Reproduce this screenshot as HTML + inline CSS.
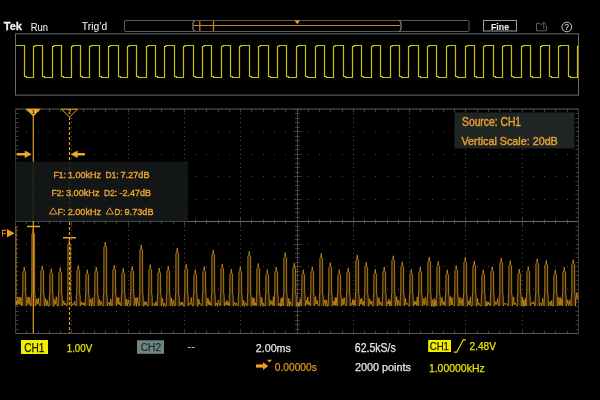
<!DOCTYPE html>
<html><head><meta charset="utf-8"><style>
html,body{margin:0;padding:0;background:#000;width:600px;height:400px;overflow:hidden}
svg{display:block;will-change:transform}
text{font-family:"Liberation Sans", sans-serif}
</style></head><body>
<svg width="600" height="400" viewBox="0 0 600 400">
<rect width="600" height="400" fill="#000"/>
<!-- top bar -->
<rect x="124.5" y="20.5" width="344.5" height="11" rx="1.5" fill="none" stroke="#5c5c5c" stroke-width="1"/>
<path d="M194,25.5 H400" stroke="#cc861a" stroke-width="1.2"/>
<path d="M199.8,21 V31 M213.5,21 V31" stroke="#cc861a" stroke-width="1.2"/>
<path d="M194.8,21 Q193,21.3 193,23 V29 Q193,30.7 194.8,31" fill="none" stroke="#a8a8a8" stroke-width="1"/>
<path d="M399.2,21 Q401,21.3 401,23 V29 Q401,30.7 399.2,31" fill="none" stroke="#a8a8a8" stroke-width="1"/>
<path d="M294.5,20.5 H300 L297.3,24.2 Z" fill="#f0a020"/>
<rect x="483.5" y="20.5" width="33" height="10.5" fill="none" stroke="#a0a0a0" stroke-width="1"/>
<path d="M546.5,25.5 V30.8 H536.5 V23.3 H539.8 L541.2,24.8 H542 M543.8,28.8 V22.2 M541.6,24.4 L543.8,22.2 L546,24.4" fill="none" stroke="#5a5e5e" stroke-width="1"/>
<circle cx="566.8" cy="27" r="4.8" fill="none" stroke="#c8c8c8" stroke-width="1"/>
<text x="566.8" y="30.3" font-size="8.6" fill="#c8c8c8" stroke="#c8c8c8" stroke-width="0.2" text-anchor="middle" textLength="4.4" lengthAdjust="spacingAndGlyphs">?</text>
<!-- overview -->
<rect x="15.5" y="33.8" width="563" height="61.3" fill="none" stroke="#6a6a6a" stroke-width="1"/>
<path d="M16,45.5 H24.5 V76.5 H26.5 V77.5 H33.5 V46.5 H35.0 V45.5 H42.5 V76.5 H44.5 V77.5 H52.5 V46.5 H54.0 V45.5 H61.5 V76.5 H63.5 V77.5 H71.5 V46.5 H73.0 V45.5 H80.5 V76.5 H82.5 V77.5 H89.5 V46.5 H91.0 V45.5 H99.5 V76.5 H101.5 V77.5 H108.5 V46.5 H110.0 V45.5 H118.5 V76.5 H120.5 V77.5 H127.5 V46.5 H129.0 V45.5 H136.5 V76.5 H138.5 V77.5 H146.5 V46.5 H148.0 V45.5 H155.5 V76.5 H157.5 V77.5 H164.5 V46.5 H166.0 V45.5 H174.5 V76.5 H176.5 V77.5 H183.5 V46.5 H185.0 V45.5 H193.5 V76.5 H195.5 V77.5 H202.5 V46.5 H204.0 V45.5 H211.5 V76.5 H213.5 V77.5 H221.5 V46.5 H223.0 V45.5 H230.5 V76.5 H232.5 V77.5 H239.5 V46.5 H241.0 V45.5 H249.5 V76.5 H251.5 V77.5 H258.5 V46.5 H260.0 V45.5 H268.5 V76.5 H270.5 V77.5 H277.5 V46.5 H279.0 V45.5 H286.5 V76.5 H288.5 V77.5 H296.5 V46.5 H298.0 V45.5 H305.5 V76.5 H307.5 V77.5 H315.5 V46.5 H317.0 V45.5 H324.5 V76.5 H326.5 V77.5 H333.5 V46.5 H335.0 V45.5 H343.5 V76.5 H345.5 V77.5 H352.5 V46.5 H354.0 V45.5 H361.5 V76.5 H363.5 V77.5 H371.5 V46.5 H373.0 V45.5 H380.5 V76.5 H382.5 V77.5 H390.5 V46.5 H392.0 V45.5 H399.5 V76.5 H401.5 V77.5 H408.5 V46.5 H410.0 V45.5 H418.5 V76.5 H420.5 V77.5 H427.5 V46.5 H429.0 V45.5 H436.5 V76.5 H438.5 V77.5 H446.5 V46.5 H448.0 V45.5 H455.5 V76.5 H457.5 V77.5 H465.5 V46.5 H467.0 V45.5 H474.5 V76.5 H476.5 V77.5 H483.5 V46.5 H485.0 V45.5 H493.5 V76.5 H495.5 V77.5 H502.5 V46.5 H504.0 V45.5 H511.5 V76.5 H513.5 V77.5 H521.5 V46.5 H523.0 V45.5 H530.5 V76.5 H532.5 V77.5 H540.5 V46.5 H542.0 V45.5 H549.5 V76.5 H551.5 V77.5 H558.5 V46.5 H560.0 V45.5 H568.5 V76.5 H570.5 V77.5 H577.5 V46.5 H578 V45.5 H578" fill="none" stroke="#ccc400" stroke-width="1.2"/>
<!-- graticule -->
<path d="M71.00,109.00h1v1h-1z M71.00,113.00h1v1h-1z M71.00,118.00h1v1h-1z M71.00,122.00h1v1h-1z M71.00,127.00h1v1h-1z M71.00,131.00h1v1h-1z M71.00,136.00h1v1h-1z M71.00,140.00h1v1h-1z M71.00,145.00h1v1h-1z M71.00,149.00h1v1h-1z M71.00,154.00h1v1h-1z M71.00,158.00h1v1h-1z M71.00,163.00h1v1h-1z M71.00,167.00h1v1h-1z M71.00,172.00h1v1h-1z M71.00,176.00h1v1h-1z M71.00,181.00h1v1h-1z M71.00,185.00h1v1h-1z M71.00,190.00h1v1h-1z M71.00,194.00h1v1h-1z M71.00,199.00h1v1h-1z M71.00,203.00h1v1h-1z M71.00,208.00h1v1h-1z M71.00,212.00h1v1h-1z M71.00,217.00h1v1h-1z M71.00,221.00h1v1h-1z M71.00,226.00h1v1h-1z M71.00,230.00h1v1h-1z M71.00,235.00h1v1h-1z M71.00,239.00h1v1h-1z M71.00,244.00h1v1h-1z M71.00,248.00h1v1h-1z M71.00,253.00h1v1h-1z M71.00,257.00h1v1h-1z M71.00,262.00h1v1h-1z M71.00,266.00h1v1h-1z M71.00,271.00h1v1h-1z M71.00,275.00h1v1h-1z M71.00,280.00h1v1h-1z M71.00,284.00h1v1h-1z M71.00,289.00h1v1h-1z M71.00,293.00h1v1h-1z M71.00,297.00h1v1h-1z M71.00,302.00h1v1h-1z M71.00,306.00h1v1h-1z M71.00,311.00h1v1h-1z M71.00,315.00h1v1h-1z M71.00,320.00h1v1h-1z M71.00,324.00h1v1h-1z M71.00,329.00h1v1h-1z M71.00,333.00h1v1h-1z M128.00,109.00h1v1h-1z M128.00,113.00h1v1h-1z M128.00,118.00h1v1h-1z M128.00,122.00h1v1h-1z M128.00,127.00h1v1h-1z M128.00,131.00h1v1h-1z M128.00,136.00h1v1h-1z M128.00,140.00h1v1h-1z M128.00,145.00h1v1h-1z M128.00,149.00h1v1h-1z M128.00,154.00h1v1h-1z M128.00,158.00h1v1h-1z M128.00,163.00h1v1h-1z M128.00,167.00h1v1h-1z M128.00,172.00h1v1h-1z M128.00,176.00h1v1h-1z M128.00,181.00h1v1h-1z M128.00,185.00h1v1h-1z M128.00,190.00h1v1h-1z M128.00,194.00h1v1h-1z M128.00,199.00h1v1h-1z M128.00,203.00h1v1h-1z M128.00,208.00h1v1h-1z M128.00,212.00h1v1h-1z M128.00,217.00h1v1h-1z M128.00,221.00h1v1h-1z M128.00,226.00h1v1h-1z M128.00,230.00h1v1h-1z M128.00,235.00h1v1h-1z M128.00,239.00h1v1h-1z M128.00,244.00h1v1h-1z M128.00,248.00h1v1h-1z M128.00,253.00h1v1h-1z M128.00,257.00h1v1h-1z M128.00,262.00h1v1h-1z M128.00,266.00h1v1h-1z M128.00,271.00h1v1h-1z M128.00,275.00h1v1h-1z M128.00,280.00h1v1h-1z M128.00,284.00h1v1h-1z M128.00,289.00h1v1h-1z M128.00,293.00h1v1h-1z M128.00,297.00h1v1h-1z M128.00,302.00h1v1h-1z M128.00,306.00h1v1h-1z M128.00,311.00h1v1h-1z M128.00,315.00h1v1h-1z M128.00,320.00h1v1h-1z M128.00,324.00h1v1h-1z M128.00,329.00h1v1h-1z M128.00,333.00h1v1h-1z M184.00,109.00h1v1h-1z M184.00,113.00h1v1h-1z M184.00,118.00h1v1h-1z M184.00,122.00h1v1h-1z M184.00,127.00h1v1h-1z M184.00,131.00h1v1h-1z M184.00,136.00h1v1h-1z M184.00,140.00h1v1h-1z M184.00,145.00h1v1h-1z M184.00,149.00h1v1h-1z M184.00,154.00h1v1h-1z M184.00,158.00h1v1h-1z M184.00,163.00h1v1h-1z M184.00,167.00h1v1h-1z M184.00,172.00h1v1h-1z M184.00,176.00h1v1h-1z M184.00,181.00h1v1h-1z M184.00,185.00h1v1h-1z M184.00,190.00h1v1h-1z M184.00,194.00h1v1h-1z M184.00,199.00h1v1h-1z M184.00,203.00h1v1h-1z M184.00,208.00h1v1h-1z M184.00,212.00h1v1h-1z M184.00,217.00h1v1h-1z M184.00,221.00h1v1h-1z M184.00,226.00h1v1h-1z M184.00,230.00h1v1h-1z M184.00,235.00h1v1h-1z M184.00,239.00h1v1h-1z M184.00,244.00h1v1h-1z M184.00,248.00h1v1h-1z M184.00,253.00h1v1h-1z M184.00,257.00h1v1h-1z M184.00,262.00h1v1h-1z M184.00,266.00h1v1h-1z M184.00,271.00h1v1h-1z M184.00,275.00h1v1h-1z M184.00,280.00h1v1h-1z M184.00,284.00h1v1h-1z M184.00,289.00h1v1h-1z M184.00,293.00h1v1h-1z M184.00,297.00h1v1h-1z M184.00,302.00h1v1h-1z M184.00,306.00h1v1h-1z M184.00,311.00h1v1h-1z M184.00,315.00h1v1h-1z M184.00,320.00h1v1h-1z M184.00,324.00h1v1h-1z M184.00,329.00h1v1h-1z M184.00,333.00h1v1h-1z M240.00,109.00h1v1h-1z M240.00,113.00h1v1h-1z M240.00,118.00h1v1h-1z M240.00,122.00h1v1h-1z M240.00,127.00h1v1h-1z M240.00,131.00h1v1h-1z M240.00,136.00h1v1h-1z M240.00,140.00h1v1h-1z M240.00,145.00h1v1h-1z M240.00,149.00h1v1h-1z M240.00,154.00h1v1h-1z M240.00,158.00h1v1h-1z M240.00,163.00h1v1h-1z M240.00,167.00h1v1h-1z M240.00,172.00h1v1h-1z M240.00,176.00h1v1h-1z M240.00,181.00h1v1h-1z M240.00,185.00h1v1h-1z M240.00,190.00h1v1h-1z M240.00,194.00h1v1h-1z M240.00,199.00h1v1h-1z M240.00,203.00h1v1h-1z M240.00,208.00h1v1h-1z M240.00,212.00h1v1h-1z M240.00,217.00h1v1h-1z M240.00,221.00h1v1h-1z M240.00,226.00h1v1h-1z M240.00,230.00h1v1h-1z M240.00,235.00h1v1h-1z M240.00,239.00h1v1h-1z M240.00,244.00h1v1h-1z M240.00,248.00h1v1h-1z M240.00,253.00h1v1h-1z M240.00,257.00h1v1h-1z M240.00,262.00h1v1h-1z M240.00,266.00h1v1h-1z M240.00,271.00h1v1h-1z M240.00,275.00h1v1h-1z M240.00,280.00h1v1h-1z M240.00,284.00h1v1h-1z M240.00,289.00h1v1h-1z M240.00,293.00h1v1h-1z M240.00,297.00h1v1h-1z M240.00,302.00h1v1h-1z M240.00,306.00h1v1h-1z M240.00,311.00h1v1h-1z M240.00,315.00h1v1h-1z M240.00,320.00h1v1h-1z M240.00,324.00h1v1h-1z M240.00,329.00h1v1h-1z M240.00,333.00h1v1h-1z M297.00,109.00h1v1h-1z M297.00,113.00h1v1h-1z M297.00,118.00h1v1h-1z M297.00,122.00h1v1h-1z M297.00,127.00h1v1h-1z M297.00,131.00h1v1h-1z M297.00,136.00h1v1h-1z M297.00,140.00h1v1h-1z M297.00,145.00h1v1h-1z M297.00,149.00h1v1h-1z M297.00,154.00h1v1h-1z M297.00,158.00h1v1h-1z M297.00,163.00h1v1h-1z M297.00,167.00h1v1h-1z M297.00,172.00h1v1h-1z M297.00,176.00h1v1h-1z M297.00,181.00h1v1h-1z M297.00,185.00h1v1h-1z M297.00,190.00h1v1h-1z M297.00,194.00h1v1h-1z M297.00,199.00h1v1h-1z M297.00,203.00h1v1h-1z M297.00,208.00h1v1h-1z M297.00,212.00h1v1h-1z M297.00,217.00h1v1h-1z M297.00,221.00h1v1h-1z M297.00,226.00h1v1h-1z M297.00,230.00h1v1h-1z M297.00,235.00h1v1h-1z M297.00,239.00h1v1h-1z M297.00,244.00h1v1h-1z M297.00,248.00h1v1h-1z M297.00,253.00h1v1h-1z M297.00,257.00h1v1h-1z M297.00,262.00h1v1h-1z M297.00,266.00h1v1h-1z M297.00,271.00h1v1h-1z M297.00,275.00h1v1h-1z M297.00,280.00h1v1h-1z M297.00,284.00h1v1h-1z M297.00,289.00h1v1h-1z M297.00,293.00h1v1h-1z M297.00,297.00h1v1h-1z M297.00,302.00h1v1h-1z M297.00,306.00h1v1h-1z M297.00,311.00h1v1h-1z M297.00,315.00h1v1h-1z M297.00,320.00h1v1h-1z M297.00,324.00h1v1h-1z M297.00,329.00h1v1h-1z M297.00,333.00h1v1h-1z M353.00,109.00h1v1h-1z M353.00,113.00h1v1h-1z M353.00,118.00h1v1h-1z M353.00,122.00h1v1h-1z M353.00,127.00h1v1h-1z M353.00,131.00h1v1h-1z M353.00,136.00h1v1h-1z M353.00,140.00h1v1h-1z M353.00,145.00h1v1h-1z M353.00,149.00h1v1h-1z M353.00,154.00h1v1h-1z M353.00,158.00h1v1h-1z M353.00,163.00h1v1h-1z M353.00,167.00h1v1h-1z M353.00,172.00h1v1h-1z M353.00,176.00h1v1h-1z M353.00,181.00h1v1h-1z M353.00,185.00h1v1h-1z M353.00,190.00h1v1h-1z M353.00,194.00h1v1h-1z M353.00,199.00h1v1h-1z M353.00,203.00h1v1h-1z M353.00,208.00h1v1h-1z M353.00,212.00h1v1h-1z M353.00,217.00h1v1h-1z M353.00,221.00h1v1h-1z M353.00,226.00h1v1h-1z M353.00,230.00h1v1h-1z M353.00,235.00h1v1h-1z M353.00,239.00h1v1h-1z M353.00,244.00h1v1h-1z M353.00,248.00h1v1h-1z M353.00,253.00h1v1h-1z M353.00,257.00h1v1h-1z M353.00,262.00h1v1h-1z M353.00,266.00h1v1h-1z M353.00,271.00h1v1h-1z M353.00,275.00h1v1h-1z M353.00,280.00h1v1h-1z M353.00,284.00h1v1h-1z M353.00,289.00h1v1h-1z M353.00,293.00h1v1h-1z M353.00,297.00h1v1h-1z M353.00,302.00h1v1h-1z M353.00,306.00h1v1h-1z M353.00,311.00h1v1h-1z M353.00,315.00h1v1h-1z M353.00,320.00h1v1h-1z M353.00,324.00h1v1h-1z M353.00,329.00h1v1h-1z M353.00,333.00h1v1h-1z M409.00,109.00h1v1h-1z M409.00,113.00h1v1h-1z M409.00,118.00h1v1h-1z M409.00,122.00h1v1h-1z M409.00,127.00h1v1h-1z M409.00,131.00h1v1h-1z M409.00,136.00h1v1h-1z M409.00,140.00h1v1h-1z M409.00,145.00h1v1h-1z M409.00,149.00h1v1h-1z M409.00,154.00h1v1h-1z M409.00,158.00h1v1h-1z M409.00,163.00h1v1h-1z M409.00,167.00h1v1h-1z M409.00,172.00h1v1h-1z M409.00,176.00h1v1h-1z M409.00,181.00h1v1h-1z M409.00,185.00h1v1h-1z M409.00,190.00h1v1h-1z M409.00,194.00h1v1h-1z M409.00,199.00h1v1h-1z M409.00,203.00h1v1h-1z M409.00,208.00h1v1h-1z M409.00,212.00h1v1h-1z M409.00,217.00h1v1h-1z M409.00,221.00h1v1h-1z M409.00,226.00h1v1h-1z M409.00,230.00h1v1h-1z M409.00,235.00h1v1h-1z M409.00,239.00h1v1h-1z M409.00,244.00h1v1h-1z M409.00,248.00h1v1h-1z M409.00,253.00h1v1h-1z M409.00,257.00h1v1h-1z M409.00,262.00h1v1h-1z M409.00,266.00h1v1h-1z M409.00,271.00h1v1h-1z M409.00,275.00h1v1h-1z M409.00,280.00h1v1h-1z M409.00,284.00h1v1h-1z M409.00,289.00h1v1h-1z M409.00,293.00h1v1h-1z M409.00,297.00h1v1h-1z M409.00,302.00h1v1h-1z M409.00,306.00h1v1h-1z M409.00,311.00h1v1h-1z M409.00,315.00h1v1h-1z M409.00,320.00h1v1h-1z M409.00,324.00h1v1h-1z M409.00,329.00h1v1h-1z M409.00,333.00h1v1h-1z M465.00,109.00h1v1h-1z M465.00,113.00h1v1h-1z M465.00,118.00h1v1h-1z M465.00,122.00h1v1h-1z M465.00,127.00h1v1h-1z M465.00,131.00h1v1h-1z M465.00,136.00h1v1h-1z M465.00,140.00h1v1h-1z M465.00,145.00h1v1h-1z M465.00,149.00h1v1h-1z M465.00,154.00h1v1h-1z M465.00,158.00h1v1h-1z M465.00,163.00h1v1h-1z M465.00,167.00h1v1h-1z M465.00,172.00h1v1h-1z M465.00,176.00h1v1h-1z M465.00,181.00h1v1h-1z M465.00,185.00h1v1h-1z M465.00,190.00h1v1h-1z M465.00,194.00h1v1h-1z M465.00,199.00h1v1h-1z M465.00,203.00h1v1h-1z M465.00,208.00h1v1h-1z M465.00,212.00h1v1h-1z M465.00,217.00h1v1h-1z M465.00,221.00h1v1h-1z M465.00,226.00h1v1h-1z M465.00,230.00h1v1h-1z M465.00,235.00h1v1h-1z M465.00,239.00h1v1h-1z M465.00,244.00h1v1h-1z M465.00,248.00h1v1h-1z M465.00,253.00h1v1h-1z M465.00,257.00h1v1h-1z M465.00,262.00h1v1h-1z M465.00,266.00h1v1h-1z M465.00,271.00h1v1h-1z M465.00,275.00h1v1h-1z M465.00,280.00h1v1h-1z M465.00,284.00h1v1h-1z M465.00,289.00h1v1h-1z M465.00,293.00h1v1h-1z M465.00,297.00h1v1h-1z M465.00,302.00h1v1h-1z M465.00,306.00h1v1h-1z M465.00,311.00h1v1h-1z M465.00,315.00h1v1h-1z M465.00,320.00h1v1h-1z M465.00,324.00h1v1h-1z M465.00,329.00h1v1h-1z M465.00,333.00h1v1h-1z M522.00,109.00h1v1h-1z M522.00,113.00h1v1h-1z M522.00,118.00h1v1h-1z M522.00,122.00h1v1h-1z M522.00,127.00h1v1h-1z M522.00,131.00h1v1h-1z M522.00,136.00h1v1h-1z M522.00,140.00h1v1h-1z M522.00,145.00h1v1h-1z M522.00,149.00h1v1h-1z M522.00,154.00h1v1h-1z M522.00,158.00h1v1h-1z M522.00,163.00h1v1h-1z M522.00,167.00h1v1h-1z M522.00,172.00h1v1h-1z M522.00,176.00h1v1h-1z M522.00,181.00h1v1h-1z M522.00,185.00h1v1h-1z M522.00,190.00h1v1h-1z M522.00,194.00h1v1h-1z M522.00,199.00h1v1h-1z M522.00,203.00h1v1h-1z M522.00,208.00h1v1h-1z M522.00,212.00h1v1h-1z M522.00,217.00h1v1h-1z M522.00,221.00h1v1h-1z M522.00,226.00h1v1h-1z M522.00,230.00h1v1h-1z M522.00,235.00h1v1h-1z M522.00,239.00h1v1h-1z M522.00,244.00h1v1h-1z M522.00,248.00h1v1h-1z M522.00,253.00h1v1h-1z M522.00,257.00h1v1h-1z M522.00,262.00h1v1h-1z M522.00,266.00h1v1h-1z M522.00,271.00h1v1h-1z M522.00,275.00h1v1h-1z M522.00,280.00h1v1h-1z M522.00,284.00h1v1h-1z M522.00,289.00h1v1h-1z M522.00,293.00h1v1h-1z M522.00,297.00h1v1h-1z M522.00,302.00h1v1h-1z M522.00,306.00h1v1h-1z M522.00,311.00h1v1h-1z M522.00,315.00h1v1h-1z M522.00,320.00h1v1h-1z M522.00,324.00h1v1h-1z M522.00,329.00h1v1h-1z M522.00,333.00h1v1h-1z M15.00,131.00h1v1h-1z M26.00,131.00h1v1h-1z M38.00,131.00h1v1h-1z M49.00,131.00h1v1h-1z M60.00,131.00h1v1h-1z M71.00,131.00h1v1h-1z M83.00,131.00h1v1h-1z M94.00,131.00h1v1h-1z M105.00,131.00h1v1h-1z M116.00,131.00h1v1h-1z M128.00,131.00h1v1h-1z M139.00,131.00h1v1h-1z M150.00,131.00h1v1h-1z M161.00,131.00h1v1h-1z M173.00,131.00h1v1h-1z M184.00,131.00h1v1h-1z M195.00,131.00h1v1h-1z M206.00,131.00h1v1h-1z M218.00,131.00h1v1h-1z M229.00,131.00h1v1h-1z M240.00,131.00h1v1h-1z M251.00,131.00h1v1h-1z M263.00,131.00h1v1h-1z M274.00,131.00h1v1h-1z M285.00,131.00h1v1h-1z M297.00,131.00h1v1h-1z M308.00,131.00h1v1h-1z M319.00,131.00h1v1h-1z M330.00,131.00h1v1h-1z M342.00,131.00h1v1h-1z M353.00,131.00h1v1h-1z M364.00,131.00h1v1h-1z M375.00,131.00h1v1h-1z M387.00,131.00h1v1h-1z M398.00,131.00h1v1h-1z M409.00,131.00h1v1h-1z M420.00,131.00h1v1h-1z M432.00,131.00h1v1h-1z M443.00,131.00h1v1h-1z M454.00,131.00h1v1h-1z M465.00,131.00h1v1h-1z M477.00,131.00h1v1h-1z M488.00,131.00h1v1h-1z M499.00,131.00h1v1h-1z M510.00,131.00h1v1h-1z M522.00,131.00h1v1h-1z M533.00,131.00h1v1h-1z M544.00,131.00h1v1h-1z M555.00,131.00h1v1h-1z M567.00,131.00h1v1h-1z M578.00,131.00h1v1h-1z M15.00,154.00h1v1h-1z M26.00,154.00h1v1h-1z M38.00,154.00h1v1h-1z M49.00,154.00h1v1h-1z M60.00,154.00h1v1h-1z M71.00,154.00h1v1h-1z M83.00,154.00h1v1h-1z M94.00,154.00h1v1h-1z M105.00,154.00h1v1h-1z M116.00,154.00h1v1h-1z M128.00,154.00h1v1h-1z M139.00,154.00h1v1h-1z M150.00,154.00h1v1h-1z M161.00,154.00h1v1h-1z M173.00,154.00h1v1h-1z M184.00,154.00h1v1h-1z M195.00,154.00h1v1h-1z M206.00,154.00h1v1h-1z M218.00,154.00h1v1h-1z M229.00,154.00h1v1h-1z M240.00,154.00h1v1h-1z M251.00,154.00h1v1h-1z M263.00,154.00h1v1h-1z M274.00,154.00h1v1h-1z M285.00,154.00h1v1h-1z M297.00,154.00h1v1h-1z M308.00,154.00h1v1h-1z M319.00,154.00h1v1h-1z M330.00,154.00h1v1h-1z M342.00,154.00h1v1h-1z M353.00,154.00h1v1h-1z M364.00,154.00h1v1h-1z M375.00,154.00h1v1h-1z M387.00,154.00h1v1h-1z M398.00,154.00h1v1h-1z M409.00,154.00h1v1h-1z M420.00,154.00h1v1h-1z M432.00,154.00h1v1h-1z M443.00,154.00h1v1h-1z M454.00,154.00h1v1h-1z M465.00,154.00h1v1h-1z M477.00,154.00h1v1h-1z M488.00,154.00h1v1h-1z M499.00,154.00h1v1h-1z M510.00,154.00h1v1h-1z M522.00,154.00h1v1h-1z M533.00,154.00h1v1h-1z M544.00,154.00h1v1h-1z M555.00,154.00h1v1h-1z M567.00,154.00h1v1h-1z M578.00,154.00h1v1h-1z M15.00,176.00h1v1h-1z M26.00,176.00h1v1h-1z M38.00,176.00h1v1h-1z M49.00,176.00h1v1h-1z M60.00,176.00h1v1h-1z M71.00,176.00h1v1h-1z M83.00,176.00h1v1h-1z M94.00,176.00h1v1h-1z M105.00,176.00h1v1h-1z M116.00,176.00h1v1h-1z M128.00,176.00h1v1h-1z M139.00,176.00h1v1h-1z M150.00,176.00h1v1h-1z M161.00,176.00h1v1h-1z M173.00,176.00h1v1h-1z M184.00,176.00h1v1h-1z M195.00,176.00h1v1h-1z M206.00,176.00h1v1h-1z M218.00,176.00h1v1h-1z M229.00,176.00h1v1h-1z M240.00,176.00h1v1h-1z M251.00,176.00h1v1h-1z M263.00,176.00h1v1h-1z M274.00,176.00h1v1h-1z M285.00,176.00h1v1h-1z M297.00,176.00h1v1h-1z M308.00,176.00h1v1h-1z M319.00,176.00h1v1h-1z M330.00,176.00h1v1h-1z M342.00,176.00h1v1h-1z M353.00,176.00h1v1h-1z M364.00,176.00h1v1h-1z M375.00,176.00h1v1h-1z M387.00,176.00h1v1h-1z M398.00,176.00h1v1h-1z M409.00,176.00h1v1h-1z M420.00,176.00h1v1h-1z M432.00,176.00h1v1h-1z M443.00,176.00h1v1h-1z M454.00,176.00h1v1h-1z M465.00,176.00h1v1h-1z M477.00,176.00h1v1h-1z M488.00,176.00h1v1h-1z M499.00,176.00h1v1h-1z M510.00,176.00h1v1h-1z M522.00,176.00h1v1h-1z M533.00,176.00h1v1h-1z M544.00,176.00h1v1h-1z M555.00,176.00h1v1h-1z M567.00,176.00h1v1h-1z M578.00,176.00h1v1h-1z M15.00,199.00h1v1h-1z M26.00,199.00h1v1h-1z M38.00,199.00h1v1h-1z M49.00,199.00h1v1h-1z M60.00,199.00h1v1h-1z M71.00,199.00h1v1h-1z M83.00,199.00h1v1h-1z M94.00,199.00h1v1h-1z M105.00,199.00h1v1h-1z M116.00,199.00h1v1h-1z M128.00,199.00h1v1h-1z M139.00,199.00h1v1h-1z M150.00,199.00h1v1h-1z M161.00,199.00h1v1h-1z M173.00,199.00h1v1h-1z M184.00,199.00h1v1h-1z M195.00,199.00h1v1h-1z M206.00,199.00h1v1h-1z M218.00,199.00h1v1h-1z M229.00,199.00h1v1h-1z M240.00,199.00h1v1h-1z M251.00,199.00h1v1h-1z M263.00,199.00h1v1h-1z M274.00,199.00h1v1h-1z M285.00,199.00h1v1h-1z M297.00,199.00h1v1h-1z M308.00,199.00h1v1h-1z M319.00,199.00h1v1h-1z M330.00,199.00h1v1h-1z M342.00,199.00h1v1h-1z M353.00,199.00h1v1h-1z M364.00,199.00h1v1h-1z M375.00,199.00h1v1h-1z M387.00,199.00h1v1h-1z M398.00,199.00h1v1h-1z M409.00,199.00h1v1h-1z M420.00,199.00h1v1h-1z M432.00,199.00h1v1h-1z M443.00,199.00h1v1h-1z M454.00,199.00h1v1h-1z M465.00,199.00h1v1h-1z M477.00,199.00h1v1h-1z M488.00,199.00h1v1h-1z M499.00,199.00h1v1h-1z M510.00,199.00h1v1h-1z M522.00,199.00h1v1h-1z M533.00,199.00h1v1h-1z M544.00,199.00h1v1h-1z M555.00,199.00h1v1h-1z M567.00,199.00h1v1h-1z M578.00,199.00h1v1h-1z M15.00,221.00h1v1h-1z M26.00,221.00h1v1h-1z M38.00,221.00h1v1h-1z M49.00,221.00h1v1h-1z M60.00,221.00h1v1h-1z M71.00,221.00h1v1h-1z M83.00,221.00h1v1h-1z M94.00,221.00h1v1h-1z M105.00,221.00h1v1h-1z M116.00,221.00h1v1h-1z M128.00,221.00h1v1h-1z M139.00,221.00h1v1h-1z M150.00,221.00h1v1h-1z M161.00,221.00h1v1h-1z M173.00,221.00h1v1h-1z M184.00,221.00h1v1h-1z M195.00,221.00h1v1h-1z M206.00,221.00h1v1h-1z M218.00,221.00h1v1h-1z M229.00,221.00h1v1h-1z M240.00,221.00h1v1h-1z M251.00,221.00h1v1h-1z M263.00,221.00h1v1h-1z M274.00,221.00h1v1h-1z M285.00,221.00h1v1h-1z M297.00,221.00h1v1h-1z M308.00,221.00h1v1h-1z M319.00,221.00h1v1h-1z M330.00,221.00h1v1h-1z M342.00,221.00h1v1h-1z M353.00,221.00h1v1h-1z M364.00,221.00h1v1h-1z M375.00,221.00h1v1h-1z M387.00,221.00h1v1h-1z M398.00,221.00h1v1h-1z M409.00,221.00h1v1h-1z M420.00,221.00h1v1h-1z M432.00,221.00h1v1h-1z M443.00,221.00h1v1h-1z M454.00,221.00h1v1h-1z M465.00,221.00h1v1h-1z M477.00,221.00h1v1h-1z M488.00,221.00h1v1h-1z M499.00,221.00h1v1h-1z M510.00,221.00h1v1h-1z M522.00,221.00h1v1h-1z M533.00,221.00h1v1h-1z M544.00,221.00h1v1h-1z M555.00,221.00h1v1h-1z M567.00,221.00h1v1h-1z M578.00,221.00h1v1h-1z M15.00,244.00h1v1h-1z M26.00,244.00h1v1h-1z M38.00,244.00h1v1h-1z M49.00,244.00h1v1h-1z M60.00,244.00h1v1h-1z M71.00,244.00h1v1h-1z M83.00,244.00h1v1h-1z M94.00,244.00h1v1h-1z M105.00,244.00h1v1h-1z M116.00,244.00h1v1h-1z M128.00,244.00h1v1h-1z M139.00,244.00h1v1h-1z M150.00,244.00h1v1h-1z M161.00,244.00h1v1h-1z M173.00,244.00h1v1h-1z M184.00,244.00h1v1h-1z M195.00,244.00h1v1h-1z M206.00,244.00h1v1h-1z M218.00,244.00h1v1h-1z M229.00,244.00h1v1h-1z M240.00,244.00h1v1h-1z M251.00,244.00h1v1h-1z M263.00,244.00h1v1h-1z M274.00,244.00h1v1h-1z M285.00,244.00h1v1h-1z M297.00,244.00h1v1h-1z M308.00,244.00h1v1h-1z M319.00,244.00h1v1h-1z M330.00,244.00h1v1h-1z M342.00,244.00h1v1h-1z M353.00,244.00h1v1h-1z M364.00,244.00h1v1h-1z M375.00,244.00h1v1h-1z M387.00,244.00h1v1h-1z M398.00,244.00h1v1h-1z M409.00,244.00h1v1h-1z M420.00,244.00h1v1h-1z M432.00,244.00h1v1h-1z M443.00,244.00h1v1h-1z M454.00,244.00h1v1h-1z M465.00,244.00h1v1h-1z M477.00,244.00h1v1h-1z M488.00,244.00h1v1h-1z M499.00,244.00h1v1h-1z M510.00,244.00h1v1h-1z M522.00,244.00h1v1h-1z M533.00,244.00h1v1h-1z M544.00,244.00h1v1h-1z M555.00,244.00h1v1h-1z M567.00,244.00h1v1h-1z M578.00,244.00h1v1h-1z M15.00,266.00h1v1h-1z M26.00,266.00h1v1h-1z M38.00,266.00h1v1h-1z M49.00,266.00h1v1h-1z M60.00,266.00h1v1h-1z M71.00,266.00h1v1h-1z M83.00,266.00h1v1h-1z M94.00,266.00h1v1h-1z M105.00,266.00h1v1h-1z M116.00,266.00h1v1h-1z M128.00,266.00h1v1h-1z M139.00,266.00h1v1h-1z M150.00,266.00h1v1h-1z M161.00,266.00h1v1h-1z M173.00,266.00h1v1h-1z M184.00,266.00h1v1h-1z M195.00,266.00h1v1h-1z M206.00,266.00h1v1h-1z M218.00,266.00h1v1h-1z M229.00,266.00h1v1h-1z M240.00,266.00h1v1h-1z M251.00,266.00h1v1h-1z M263.00,266.00h1v1h-1z M274.00,266.00h1v1h-1z M285.00,266.00h1v1h-1z M297.00,266.00h1v1h-1z M308.00,266.00h1v1h-1z M319.00,266.00h1v1h-1z M330.00,266.00h1v1h-1z M342.00,266.00h1v1h-1z M353.00,266.00h1v1h-1z M364.00,266.00h1v1h-1z M375.00,266.00h1v1h-1z M387.00,266.00h1v1h-1z M398.00,266.00h1v1h-1z M409.00,266.00h1v1h-1z M420.00,266.00h1v1h-1z M432.00,266.00h1v1h-1z M443.00,266.00h1v1h-1z M454.00,266.00h1v1h-1z M465.00,266.00h1v1h-1z M477.00,266.00h1v1h-1z M488.00,266.00h1v1h-1z M499.00,266.00h1v1h-1z M510.00,266.00h1v1h-1z M522.00,266.00h1v1h-1z M533.00,266.00h1v1h-1z M544.00,266.00h1v1h-1z M555.00,266.00h1v1h-1z M567.00,266.00h1v1h-1z M578.00,266.00h1v1h-1z M15.00,289.00h1v1h-1z M26.00,289.00h1v1h-1z M38.00,289.00h1v1h-1z M49.00,289.00h1v1h-1z M60.00,289.00h1v1h-1z M71.00,289.00h1v1h-1z M83.00,289.00h1v1h-1z M94.00,289.00h1v1h-1z M105.00,289.00h1v1h-1z M116.00,289.00h1v1h-1z M128.00,289.00h1v1h-1z M139.00,289.00h1v1h-1z M150.00,289.00h1v1h-1z M161.00,289.00h1v1h-1z M173.00,289.00h1v1h-1z M184.00,289.00h1v1h-1z M195.00,289.00h1v1h-1z M206.00,289.00h1v1h-1z M218.00,289.00h1v1h-1z M229.00,289.00h1v1h-1z M240.00,289.00h1v1h-1z M251.00,289.00h1v1h-1z M263.00,289.00h1v1h-1z M274.00,289.00h1v1h-1z M285.00,289.00h1v1h-1z M297.00,289.00h1v1h-1z M308.00,289.00h1v1h-1z M319.00,289.00h1v1h-1z M330.00,289.00h1v1h-1z M342.00,289.00h1v1h-1z M353.00,289.00h1v1h-1z M364.00,289.00h1v1h-1z M375.00,289.00h1v1h-1z M387.00,289.00h1v1h-1z M398.00,289.00h1v1h-1z M409.00,289.00h1v1h-1z M420.00,289.00h1v1h-1z M432.00,289.00h1v1h-1z M443.00,289.00h1v1h-1z M454.00,289.00h1v1h-1z M465.00,289.00h1v1h-1z M477.00,289.00h1v1h-1z M488.00,289.00h1v1h-1z M499.00,289.00h1v1h-1z M510.00,289.00h1v1h-1z M522.00,289.00h1v1h-1z M533.00,289.00h1v1h-1z M544.00,289.00h1v1h-1z M555.00,289.00h1v1h-1z M567.00,289.00h1v1h-1z M578.00,289.00h1v1h-1z M15.00,311.00h1v1h-1z M26.00,311.00h1v1h-1z M38.00,311.00h1v1h-1z M49.00,311.00h1v1h-1z M60.00,311.00h1v1h-1z M71.00,311.00h1v1h-1z M83.00,311.00h1v1h-1z M94.00,311.00h1v1h-1z M105.00,311.00h1v1h-1z M116.00,311.00h1v1h-1z M128.00,311.00h1v1h-1z M139.00,311.00h1v1h-1z M150.00,311.00h1v1h-1z M161.00,311.00h1v1h-1z M173.00,311.00h1v1h-1z M184.00,311.00h1v1h-1z M195.00,311.00h1v1h-1z M206.00,311.00h1v1h-1z M218.00,311.00h1v1h-1z M229.00,311.00h1v1h-1z M240.00,311.00h1v1h-1z M251.00,311.00h1v1h-1z M263.00,311.00h1v1h-1z M274.00,311.00h1v1h-1z M285.00,311.00h1v1h-1z M297.00,311.00h1v1h-1z M308.00,311.00h1v1h-1z M319.00,311.00h1v1h-1z M330.00,311.00h1v1h-1z M342.00,311.00h1v1h-1z M353.00,311.00h1v1h-1z M364.00,311.00h1v1h-1z M375.00,311.00h1v1h-1z M387.00,311.00h1v1h-1z M398.00,311.00h1v1h-1z M409.00,311.00h1v1h-1z M420.00,311.00h1v1h-1z M432.00,311.00h1v1h-1z M443.00,311.00h1v1h-1z M454.00,311.00h1v1h-1z M465.00,311.00h1v1h-1z M477.00,311.00h1v1h-1z M488.00,311.00h1v1h-1z M499.00,311.00h1v1h-1z M510.00,311.00h1v1h-1z M522.00,311.00h1v1h-1z M533.00,311.00h1v1h-1z M544.00,311.00h1v1h-1z M555.00,311.00h1v1h-1z M567.00,311.00h1v1h-1z M578.00,311.00h1v1h-1z" fill="#484848"/>
<path d="M293.50,109.50H301.50 M15.50,109.50H18.50 M575.50,109.50H578.50 M295.00,113.50H300.00 M15.50,113.50H18.50 M575.50,113.50H578.50 M295.00,118.50H300.00 M15.50,118.50H18.50 M575.50,118.50H578.50 M295.00,122.50H300.00 M15.50,122.50H18.50 M575.50,122.50H578.50 M295.00,127.50H300.00 M15.50,127.50H18.50 M575.50,127.50H578.50 M293.50,131.50H301.50 M15.50,131.50H18.50 M575.50,131.50H578.50 M295.00,136.50H300.00 M15.50,136.50H18.50 M575.50,136.50H578.50 M295.00,140.50H300.00 M15.50,140.50H18.50 M575.50,140.50H578.50 M295.00,145.50H300.00 M15.50,145.50H18.50 M575.50,145.50H578.50 M295.00,149.50H300.00 M15.50,149.50H18.50 M575.50,149.50H578.50 M293.50,154.50H301.50 M15.50,154.50H18.50 M575.50,154.50H578.50 M295.00,158.50H300.00 M15.50,158.50H18.50 M575.50,158.50H578.50 M295.00,163.50H300.00 M15.50,163.50H18.50 M575.50,163.50H578.50 M295.00,167.50H300.00 M15.50,167.50H18.50 M575.50,167.50H578.50 M295.00,172.50H300.00 M15.50,172.50H18.50 M575.50,172.50H578.50 M293.50,176.50H301.50 M15.50,176.50H18.50 M575.50,176.50H578.50 M295.00,181.50H300.00 M15.50,181.50H18.50 M575.50,181.50H578.50 M295.00,185.50H300.00 M15.50,185.50H18.50 M575.50,185.50H578.50 M295.00,190.50H300.00 M15.50,190.50H18.50 M575.50,190.50H578.50 M295.00,194.50H300.00 M15.50,194.50H18.50 M575.50,194.50H578.50 M293.50,199.50H301.50 M15.50,199.50H18.50 M575.50,199.50H578.50 M295.00,203.50H300.00 M15.50,203.50H18.50 M575.50,203.50H578.50 M295.00,208.50H300.00 M15.50,208.50H18.50 M575.50,208.50H578.50 M295.00,212.50H300.00 M15.50,212.50H18.50 M575.50,212.50H578.50 M295.00,217.50H300.00 M15.50,217.50H18.50 M575.50,217.50H578.50 M293.50,221.50H301.50 M15.50,221.50H18.50 M575.50,221.50H578.50 M295.00,226.50H300.00 M15.50,226.50H18.50 M575.50,226.50H578.50 M295.00,230.50H300.00 M15.50,230.50H18.50 M575.50,230.50H578.50 M295.00,235.50H300.00 M15.50,235.50H18.50 M575.50,235.50H578.50 M295.00,239.50H300.00 M15.50,239.50H18.50 M575.50,239.50H578.50 M293.50,244.50H301.50 M15.50,244.50H18.50 M575.50,244.50H578.50 M295.00,248.50H300.00 M15.50,248.50H18.50 M575.50,248.50H578.50 M295.00,253.50H300.00 M15.50,253.50H18.50 M575.50,253.50H578.50 M295.00,257.50H300.00 M15.50,257.50H18.50 M575.50,257.50H578.50 M295.00,262.50H300.00 M15.50,262.50H18.50 M575.50,262.50H578.50 M293.50,266.50H301.50 M15.50,266.50H18.50 M575.50,266.50H578.50 M295.00,271.50H300.00 M15.50,271.50H18.50 M575.50,271.50H578.50 M295.00,275.50H300.00 M15.50,275.50H18.50 M575.50,275.50H578.50 M295.00,280.50H300.00 M15.50,280.50H18.50 M575.50,280.50H578.50 M295.00,284.50H300.00 M15.50,284.50H18.50 M575.50,284.50H578.50 M293.50,289.50H301.50 M15.50,289.50H18.50 M575.50,289.50H578.50 M295.00,293.50H300.00 M15.50,293.50H18.50 M575.50,293.50H578.50 M295.00,297.50H300.00 M15.50,297.50H18.50 M575.50,297.50H578.50 M295.00,302.50H300.00 M15.50,302.50H18.50 M575.50,302.50H578.50 M295.00,306.50H300.00 M15.50,306.50H18.50 M575.50,306.50H578.50 M293.50,311.50H301.50 M15.50,311.50H18.50 M575.50,311.50H578.50 M295.00,315.50H300.00 M15.50,315.50H18.50 M575.50,315.50H578.50 M295.00,320.50H300.00 M15.50,320.50H18.50 M575.50,320.50H578.50 M295.00,324.50H300.00 M15.50,324.50H18.50 M575.50,324.50H578.50 M295.00,329.50H300.00 M15.50,329.50H18.50 M575.50,329.50H578.50 M293.50,333.50H301.50 M15.50,333.50H18.50 M575.50,333.50H578.50 M15.50,217.50V225.50 M15.50,109.00V112.00 M15.50,330.50V333.50 M26.50,219.00V224.00 M26.50,109.00V112.00 M26.50,330.50V333.50 M38.50,219.00V224.00 M38.50,109.00V112.00 M38.50,330.50V333.50 M49.50,219.00V224.00 M49.50,109.00V112.00 M49.50,330.50V333.50 M60.50,219.00V224.00 M60.50,109.00V112.00 M60.50,330.50V333.50 M71.50,217.50V225.50 M71.50,109.00V112.00 M71.50,330.50V333.50 M83.50,219.00V224.00 M83.50,109.00V112.00 M83.50,330.50V333.50 M94.50,219.00V224.00 M94.50,109.00V112.00 M94.50,330.50V333.50 M105.50,219.00V224.00 M105.50,109.00V112.00 M105.50,330.50V333.50 M116.50,219.00V224.00 M116.50,109.00V112.00 M116.50,330.50V333.50 M128.50,217.50V225.50 M128.50,109.00V112.00 M128.50,330.50V333.50 M139.50,219.00V224.00 M139.50,109.00V112.00 M139.50,330.50V333.50 M150.50,219.00V224.00 M150.50,109.00V112.00 M150.50,330.50V333.50 M161.50,219.00V224.00 M161.50,109.00V112.00 M161.50,330.50V333.50 M173.50,219.00V224.00 M173.50,109.00V112.00 M173.50,330.50V333.50 M184.50,217.50V225.50 M184.50,109.00V112.00 M184.50,330.50V333.50 M195.50,219.00V224.00 M195.50,109.00V112.00 M195.50,330.50V333.50 M206.50,219.00V224.00 M206.50,109.00V112.00 M206.50,330.50V333.50 M218.50,219.00V224.00 M218.50,109.00V112.00 M218.50,330.50V333.50 M229.50,219.00V224.00 M229.50,109.00V112.00 M229.50,330.50V333.50 M240.50,217.50V225.50 M240.50,109.00V112.00 M240.50,330.50V333.50 M251.50,219.00V224.00 M251.50,109.00V112.00 M251.50,330.50V333.50 M263.50,219.00V224.00 M263.50,109.00V112.00 M263.50,330.50V333.50 M274.50,219.00V224.00 M274.50,109.00V112.00 M274.50,330.50V333.50 M285.50,219.00V224.00 M285.50,109.00V112.00 M285.50,330.50V333.50 M297.50,217.50V225.50 M297.50,109.00V112.00 M297.50,330.50V333.50 M308.50,219.00V224.00 M308.50,109.00V112.00 M308.50,330.50V333.50 M319.50,219.00V224.00 M319.50,109.00V112.00 M319.50,330.50V333.50 M330.50,219.00V224.00 M330.50,109.00V112.00 M330.50,330.50V333.50 M342.50,219.00V224.00 M342.50,109.00V112.00 M342.50,330.50V333.50 M353.50,217.50V225.50 M353.50,109.00V112.00 M353.50,330.50V333.50 M364.50,219.00V224.00 M364.50,109.00V112.00 M364.50,330.50V333.50 M375.50,219.00V224.00 M375.50,109.00V112.00 M375.50,330.50V333.50 M387.50,219.00V224.00 M387.50,109.00V112.00 M387.50,330.50V333.50 M398.50,219.00V224.00 M398.50,109.00V112.00 M398.50,330.50V333.50 M409.50,217.50V225.50 M409.50,109.00V112.00 M409.50,330.50V333.50 M420.50,219.00V224.00 M420.50,109.00V112.00 M420.50,330.50V333.50 M432.50,219.00V224.00 M432.50,109.00V112.00 M432.50,330.50V333.50 M443.50,219.00V224.00 M443.50,109.00V112.00 M443.50,330.50V333.50 M454.50,219.00V224.00 M454.50,109.00V112.00 M454.50,330.50V333.50 M465.50,217.50V225.50 M465.50,109.00V112.00 M465.50,330.50V333.50 M477.50,219.00V224.00 M477.50,109.00V112.00 M477.50,330.50V333.50 M488.50,219.00V224.00 M488.50,109.00V112.00 M488.50,330.50V333.50 M499.50,219.00V224.00 M499.50,109.00V112.00 M499.50,330.50V333.50 M510.50,219.00V224.00 M510.50,109.00V112.00 M510.50,330.50V333.50 M522.50,217.50V225.50 M522.50,109.00V112.00 M522.50,330.50V333.50 M533.50,219.00V224.00 M533.50,109.00V112.00 M533.50,330.50V333.50 M544.50,219.00V224.00 M544.50,109.00V112.00 M544.50,330.50V333.50 M555.50,219.00V224.00 M555.50,109.00V112.00 M555.50,330.50V333.50 M567.50,219.00V224.00 M567.50,109.00V112.00 M567.50,330.50V333.50 M578.50,217.50V225.50 M578.50,109.00V112.00 M578.50,330.50V333.50 " stroke="#3c3c40" stroke-width="1" fill="none"/>
<path d="M188,221.50 H578.5" stroke="#68686e" stroke-width="1"/>
<path d="M15.5,221.50 H188" stroke="#48484c" stroke-width="1"/>
<path d="M297.50,109 V333.5" stroke="#4a4a50" stroke-width="1"/>
<path d="M15.5,109 H578.5 M15.5,333.5 H578.5" stroke="#585858" stroke-width="1"/>
<path d="M15.5,109 V333.5 M578.5,109 V333.5" stroke="#3a3a3a" stroke-width="1"/>
<!-- spectrum -->
<path d="M22.15,306.00 L22.35,296.00 L22.80,293.00 L22.90,271.94 L23.80,270.94 L24.25,266.94 L24.70,270.94 L25.60,271.94 L25.70,293.00 L26.15,296.00 L26.35,306.00 Z M31.15,306.00 L31.35,296.00 L31.80,293.00 L31.90,234.00 L32.80,233.00 L33.25,229.00 L33.70,233.00 L34.60,234.00 L34.70,293.00 L35.15,296.00 L35.35,306.00 Z M40.15,306.00 L40.35,296.00 L40.80,293.00 L40.90,270.80 L41.80,269.80 L42.25,265.80 L42.70,269.80 L43.60,270.80 L43.70,293.00 L44.15,296.00 L44.35,306.00 Z M49.15,306.00 L49.35,296.00 L49.80,293.00 L49.90,273.58 L50.80,272.58 L51.25,268.58 L51.70,272.58 L52.60,273.58 L52.70,293.00 L53.15,296.00 L53.35,306.00 Z M58.15,306.00 L58.35,296.00 L58.80,293.00 L58.90,272.69 L59.80,271.69 L60.25,267.69 L60.70,271.69 L61.60,272.69 L61.70,293.00 L62.15,296.00 L62.35,306.00 Z M67.15,306.00 L67.35,296.00 L67.80,293.00 L67.90,245.00 L68.80,244.00 L69.25,240.00 L69.70,244.00 L70.60,245.00 L70.70,293.00 L71.15,296.00 L71.35,306.00 Z M76.15,306.00 L76.35,296.00 L76.80,293.00 L76.90,270.41 L77.80,269.41 L78.25,265.41 L78.70,269.41 L79.60,270.41 L79.70,293.00 L80.15,296.00 L80.35,306.00 Z M85.15,306.00 L85.35,296.00 L85.80,293.00 L85.90,274.73 L86.80,273.73 L87.25,269.73 L87.70,273.73 L88.60,274.73 L88.70,293.00 L89.15,296.00 L89.35,306.00 Z M94.15,306.00 L94.35,296.00 L94.80,293.00 L94.90,271.97 L95.80,270.97 L96.25,266.97 L96.70,270.97 L97.60,271.97 L97.70,293.00 L98.15,296.00 L98.35,306.00 Z M103.15,306.00 L103.35,296.00 L103.80,293.00 L103.90,247.00 L104.80,246.00 L105.25,242.00 L105.70,246.00 L106.60,247.00 L106.70,293.00 L107.15,296.00 L107.35,306.00 Z M112.15,306.00 L112.35,296.00 L112.80,293.00 L112.90,270.02 L113.80,269.02 L114.25,265.02 L114.70,269.02 L115.60,270.02 L115.70,293.00 L116.15,296.00 L116.35,306.00 Z M121.15,306.00 L121.35,296.00 L121.80,293.00 L121.90,273.30 L122.80,272.30 L123.25,268.30 L123.70,272.30 L124.60,273.30 L124.70,293.00 L125.15,296.00 L125.35,306.00 Z M130.15,306.00 L130.35,296.00 L130.80,293.00 L130.90,271.36 L131.80,270.36 L132.25,266.36 L132.70,270.36 L133.60,271.36 L133.70,293.00 L134.15,296.00 L134.35,306.00 Z M139.15,306.00 L139.35,296.00 L139.80,293.00 L139.90,250.00 L140.80,249.00 L141.25,245.00 L141.70,249.00 L142.60,250.00 L142.70,293.00 L143.15,296.00 L143.35,306.00 Z M148.15,306.00 L148.35,296.00 L148.80,293.00 L148.90,269.62 L149.80,268.62 L150.25,264.62 L150.70,268.62 L151.60,269.62 L151.70,293.00 L152.15,296.00 L152.35,306.00 Z M157.15,306.00 L157.35,296.00 L157.80,293.00 L157.90,273.06 L158.80,272.06 L159.25,268.06 L159.70,272.06 L160.60,273.06 L160.70,293.00 L161.15,296.00 L161.35,306.00 Z M166.15,306.00 L166.35,296.00 L166.80,293.00 L166.90,271.05 L167.80,270.05 L168.25,266.05 L168.70,270.05 L169.60,271.05 L169.70,293.00 L170.15,296.00 L170.35,306.00 Z M175.15,306.00 L175.35,296.00 L175.80,293.00 L175.90,253.00 L176.80,252.00 L177.25,248.00 L177.70,252.00 L178.60,253.00 L178.70,293.00 L179.15,296.00 L179.35,306.00 Z M184.15,306.00 L184.35,296.00 L184.80,293.00 L184.90,269.23 L185.80,268.23 L186.25,264.23 L186.70,268.23 L187.60,269.23 L187.70,293.00 L188.15,296.00 L188.35,306.00 Z M193.15,306.00 L193.35,296.00 L193.80,293.00 L193.90,274.65 L194.80,273.65 L195.25,269.65 L195.70,273.65 L196.60,274.65 L196.70,293.00 L197.15,296.00 L197.35,306.00 Z M202.15,306.00 L202.35,296.00 L202.80,293.00 L202.90,271.58 L203.80,270.58 L204.25,266.58 L204.70,270.58 L205.60,271.58 L205.70,293.00 L206.15,296.00 L206.35,306.00 Z M211.15,306.00 L211.35,296.00 L211.80,293.00 L211.90,255.00 L212.80,254.00 L213.25,250.00 L213.70,254.00 L214.60,255.00 L214.70,293.00 L215.15,296.00 L215.35,306.00 Z M220.15,306.00 L220.35,296.00 L220.80,293.00 L220.90,268.84 L221.80,267.84 L222.25,263.84 L222.70,267.84 L223.60,268.84 L223.70,293.00 L224.15,296.00 L224.35,306.00 Z M229.15,306.00 L229.35,296.00 L229.80,293.00 L229.90,274.12 L230.80,273.12 L231.25,269.12 L231.70,273.12 L232.60,274.12 L232.70,293.00 L233.15,296.00 L233.35,306.00 Z M238.15,306.00 L238.35,296.00 L238.80,293.00 L238.90,271.78 L239.80,270.78 L240.25,266.78 L240.70,270.78 L241.60,271.78 L241.70,293.00 L242.15,296.00 L242.35,306.00 Z M247.15,306.00 L247.35,296.00 L247.80,293.00 L247.90,256.25 L248.80,255.25 L249.25,251.25 L249.70,255.25 L250.60,256.25 L250.70,293.00 L251.15,296.00 L251.35,306.00 Z M256.15,306.00 L256.35,296.00 L256.80,293.00 L256.90,268.44 L257.80,267.44 L258.25,263.44 L258.70,267.44 L259.60,268.44 L259.70,293.00 L260.15,296.00 L260.35,306.00 Z M265.15,306.00 L265.35,296.00 L265.80,293.00 L265.90,274.66 L266.80,273.66 L267.25,269.66 L267.70,273.66 L268.60,274.66 L268.70,293.00 L269.15,296.00 L269.35,306.00 Z M274.15,306.00 L274.35,296.00 L274.80,293.00 L274.90,272.06 L275.80,271.06 L276.25,267.06 L276.70,271.06 L277.60,272.06 L277.70,293.00 L278.15,296.00 L278.35,306.00 Z M283.15,306.00 L283.35,296.00 L283.80,293.00 L283.90,257.50 L284.80,256.50 L285.25,252.50 L285.70,256.50 L286.60,257.50 L286.70,293.00 L287.15,296.00 L287.35,306.00 Z M292.15,306.00 L292.35,296.00 L292.80,293.00 L292.90,268.05 L293.80,267.05 L294.25,263.05 L294.70,267.05 L295.60,268.05 L295.70,293.00 L296.15,296.00 L296.35,306.00 Z M301.15,306.00 L301.35,296.00 L301.80,293.00 L301.90,274.85 L302.80,273.85 L303.25,269.85 L303.70,273.85 L304.60,274.85 L304.70,293.00 L305.15,296.00 L305.35,306.00 Z M310.15,306.00 L310.35,296.00 L310.80,293.00 L310.90,271.75 L311.80,270.75 L312.25,266.75 L312.70,270.75 L313.60,271.75 L313.70,293.00 L314.15,296.00 L314.35,306.00 Z M319.15,306.00 L319.35,296.00 L319.80,293.00 L319.90,258.25 L320.80,257.25 L321.25,253.25 L321.70,257.25 L322.60,258.25 L322.70,293.00 L323.15,296.00 L323.35,306.00 Z M328.15,306.00 L328.35,296.00 L328.80,293.00 L328.90,267.66 L329.80,266.66 L330.25,262.66 L330.70,266.66 L331.60,267.66 L331.70,293.00 L332.15,296.00 L332.35,306.00 Z M337.15,306.00 L337.35,296.00 L337.80,293.00 L337.90,274.68 L338.80,273.68 L339.25,269.68 L339.70,273.68 L340.60,274.68 L340.70,293.00 L341.15,296.00 L341.35,306.00 Z M346.15,306.00 L346.35,296.00 L346.80,293.00 L346.90,272.93 L347.80,271.93 L348.25,267.93 L348.70,271.93 L349.60,272.93 L349.70,293.00 L350.15,296.00 L350.35,306.00 Z M355.15,306.00 L355.35,296.00 L355.80,293.00 L355.90,260.00 L356.80,259.00 L357.25,255.00 L357.70,259.00 L358.60,260.00 L358.70,293.00 L359.15,296.00 L359.35,306.00 Z M364.15,306.00 L364.35,296.00 L364.80,293.00 L364.90,267.26 L365.80,266.26 L366.25,262.26 L366.70,266.26 L367.60,267.26 L367.70,293.00 L368.15,296.00 L368.35,306.00 Z M373.15,306.00 L373.35,296.00 L373.80,293.00 L373.90,274.25 L374.80,273.25 L375.25,269.25 L375.70,273.25 L376.60,274.25 L376.70,293.00 L377.15,296.00 L377.35,306.00 Z M382.15,306.00 L382.35,296.00 L382.80,293.00 L382.90,271.96 L383.80,270.96 L384.25,266.96 L384.70,270.96 L385.60,271.96 L385.70,293.00 L386.15,296.00 L386.35,306.00 Z M391.15,306.00 L391.35,296.00 L391.80,293.00 L391.90,260.75 L392.80,259.75 L393.25,255.75 L393.70,259.75 L394.60,260.75 L394.70,293.00 L395.15,296.00 L395.35,306.00 Z M400.15,306.00 L400.35,296.00 L400.80,293.00 L400.90,266.87 L401.80,265.87 L402.25,261.87 L402.70,265.87 L403.60,266.87 L403.70,293.00 L404.15,296.00 L404.35,306.00 Z M409.15,306.00 L409.35,296.00 L409.80,293.00 L409.90,274.37 L410.80,273.37 L411.25,269.37 L411.70,273.37 L412.60,274.37 L412.70,293.00 L413.15,296.00 L413.35,306.00 Z M418.15,306.00 L418.35,296.00 L418.80,293.00 L418.90,272.18 L419.80,271.18 L420.25,267.18 L420.70,271.18 L421.60,272.18 L421.70,293.00 L422.15,296.00 L422.35,306.00 Z M427.15,306.00 L427.35,296.00 L427.80,293.00 L427.90,262.00 L428.80,261.00 L429.25,257.00 L429.70,261.00 L430.60,262.00 L430.70,293.00 L431.15,296.00 L431.35,306.00 Z M436.15,306.00 L436.35,296.00 L436.80,293.00 L436.90,266.48 L437.80,265.48 L438.25,261.48 L438.70,265.48 L439.60,266.48 L439.70,293.00 L440.15,296.00 L440.35,306.00 Z M445.15,306.00 L445.35,296.00 L445.80,293.00 L445.90,274.80 L446.80,273.80 L447.25,269.80 L447.70,273.80 L448.60,274.80 L448.70,293.00 L449.15,296.00 L449.35,306.00 Z M454.15,306.00 L454.35,296.00 L454.80,293.00 L454.90,270.50 L455.80,269.50 L456.25,265.50 L456.70,269.50 L457.60,270.50 L457.70,293.00 L458.15,296.00 L458.35,306.00 Z M463.15,306.00 L463.35,296.00 L463.80,293.00 L463.90,262.50 L464.80,261.50 L465.25,257.50 L465.70,261.50 L466.60,262.50 L466.70,293.00 L467.15,296.00 L467.35,306.00 Z M472.15,306.00 L472.35,296.00 L472.80,293.00 L472.90,266.08 L473.80,265.08 L474.25,261.08 L474.70,265.08 L475.60,266.08 L475.70,293.00 L476.15,296.00 L476.35,306.00 Z M481.15,306.00 L481.35,296.00 L481.80,293.00 L481.90,274.83 L482.80,273.83 L483.25,269.83 L483.70,273.83 L484.60,274.83 L484.70,293.00 L485.15,296.00 L485.35,306.00 Z M490.15,306.00 L490.35,296.00 L490.80,293.00 L490.90,271.68 L491.80,270.68 L492.25,266.68 L492.70,270.68 L493.60,271.68 L493.70,293.00 L494.15,296.00 L494.35,306.00 Z M499.15,306.00 L499.35,296.00 L499.80,293.00 L499.90,263.00 L500.80,262.00 L501.25,258.00 L501.70,262.00 L502.60,263.00 L502.70,293.00 L503.15,296.00 L503.35,306.00 Z M508.15,306.00 L508.35,296.00 L508.80,293.00 L508.90,265.69 L509.80,264.69 L510.25,260.69 L510.70,264.69 L511.60,265.69 L511.70,293.00 L512.15,296.00 L512.35,306.00 Z M517.15,306.00 L517.35,296.00 L517.80,293.00 L517.90,274.05 L518.80,273.05 L519.25,269.05 L519.70,273.05 L520.60,274.05 L520.70,293.00 L521.15,296.00 L521.35,306.00 Z M526.15,306.00 L526.35,296.00 L526.80,293.00 L526.90,271.50 L527.80,270.50 L528.25,266.50 L528.70,270.50 L529.60,271.50 L529.70,293.00 L530.15,296.00 L530.35,306.00 Z M535.15,306.00 L535.35,296.00 L535.80,293.00 L535.90,263.75 L536.80,262.75 L537.25,258.75 L537.70,262.75 L538.60,263.75 L538.70,293.00 L539.15,296.00 L539.35,306.00 Z M544.15,306.00 L544.35,296.00 L544.80,293.00 L544.90,265.30 L545.80,264.30 L546.25,260.30 L546.70,264.30 L547.60,265.30 L547.70,293.00 L548.15,296.00 L548.35,306.00 Z M553.15,306.00 L553.35,296.00 L553.80,293.00 L553.90,274.84 L554.80,273.84 L555.25,269.84 L555.70,273.84 L556.60,274.84 L556.70,293.00 L557.15,296.00 L557.35,306.00 Z M562.15,306.00 L562.35,296.00 L562.80,293.00 L562.90,272.00 L563.80,271.00 L564.25,267.00 L564.70,271.00 L565.60,272.00 L565.70,293.00 L566.15,296.00 L566.35,306.00 Z M571.15,306.00 L571.35,296.00 L571.80,293.00 L571.90,264.50 L572.80,263.50 L573.25,259.50 L573.70,263.50 L574.60,264.50 L574.70,293.00 L575.15,296.00 L575.35,306.00 Z" fill="#2e1f06"/>
<path d="M16.00,226.50 L16.00,300.00 L16.00,304.81 L16.59,301.06 L17.13,305.34 L17.85,296.91 L18.66,304.09 L19.42,296.99 L19.97,305.06 L20.97,297.37 L21.60,305.57 L22.15,306.00 L22.35,296.00 L22.80,293.00 L22.90,271.94 L23.80,270.94 L24.25,266.94 L24.70,270.94 L25.60,271.94 L25.70,293.00 L26.15,296.00 L26.35,306.00 L26.95,304.99 L28.04,296.83 L29.05,304.72 L29.64,297.32 L30.32,306.04 L31.15,306.00 L31.35,296.00 L31.80,293.00 L31.90,234.00 L32.80,233.00 L33.25,229.00 L33.70,233.00 L34.60,234.00 L34.70,293.00 L35.15,296.00 L35.35,306.00 L35.95,305.45 L36.83,299.11 L37.66,304.16 L38.20,297.94 L39.11,305.07 L40.15,306.00 L40.35,296.00 L40.80,293.00 L40.90,270.80 L41.80,269.80 L42.25,265.80 L42.70,269.80 L43.60,270.80 L43.70,293.00 L44.15,296.00 L44.35,306.00 L44.95,305.46 L45.72,298.60 L46.70,305.75 L47.34,300.52 L48.16,306.19 L49.15,306.00 L49.35,296.00 L49.80,293.00 L49.90,273.58 L50.80,272.58 L51.25,268.58 L51.70,272.58 L52.60,273.58 L52.70,293.00 L53.15,296.00 L53.35,306.00 L53.95,306.45 L54.52,299.43 L55.48,304.38 L56.27,296.77 L57.17,305.91 L58.15,306.00 L58.35,296.00 L58.80,293.00 L58.90,272.69 L59.80,271.69 L60.25,267.69 L60.70,271.69 L61.60,272.69 L61.70,293.00 L62.15,296.00 L62.35,306.00 L62.95,304.78 L63.87,300.66 L64.72,305.14 L65.72,303.11 L66.50,305.66 L67.15,306.00 L67.35,296.00 L67.80,293.00 L67.90,245.00 L68.80,244.00 L69.25,240.00 L69.70,244.00 L70.60,245.00 L70.70,293.00 L71.15,296.00 L71.35,306.00 L71.95,305.75 L72.84,303.45 L73.83,304.71 L74.56,301.18 L75.08,305.15 L76.15,306.00 L76.35,296.00 L76.80,293.00 L76.90,270.41 L77.80,269.41 L78.25,265.41 L78.70,269.41 L79.60,270.41 L79.70,293.00 L80.15,296.00 L80.35,306.00 L80.95,304.29 L81.49,301.88 L82.06,304.62 L82.80,302.60 L83.35,305.12 L84.18,302.68 L85.15,306.00 L85.35,296.00 L85.80,293.00 L85.90,274.73 L86.80,273.73 L87.25,269.73 L87.70,273.73 L88.60,274.73 L88.70,293.00 L89.15,296.00 L89.35,306.00 L89.95,304.70 L90.70,299.01 L91.73,306.39 L92.32,297.73 L92.96,304.58 L94.15,306.00 L94.35,296.00 L94.80,293.00 L94.90,271.97 L95.80,270.97 L96.25,266.97 L96.70,270.97 L97.60,271.97 L97.70,293.00 L98.15,296.00 L98.35,306.00 L98.95,304.66 L99.45,299.43 L100.17,305.42 L101.25,301.33 L102.06,305.54 L103.15,306.00 L103.35,296.00 L103.80,293.00 L103.90,247.00 L104.80,246.00 L105.25,242.00 L105.70,246.00 L106.60,247.00 L106.70,293.00 L107.15,296.00 L107.35,306.00 L107.95,304.13 L108.99,301.96 L110.01,305.99 L110.75,299.29 L111.31,305.59 L112.15,306.00 L112.35,296.00 L112.80,293.00 L112.90,270.02 L113.80,269.02 L114.25,265.02 L114.70,269.02 L115.60,270.02 L115.70,293.00 L116.15,296.00 L116.35,306.00 L116.95,304.17 L117.58,297.64 L118.28,304.13 L118.78,297.56 L119.34,304.91 L119.86,302.62 L121.15,306.00 L121.35,296.00 L121.80,293.00 L121.90,273.30 L122.80,272.30 L123.25,268.30 L123.70,272.30 L124.60,273.30 L124.70,293.00 L125.15,296.00 L125.35,306.00 L125.95,304.63 L126.66,299.05 L127.23,306.12 L128.33,299.76 L129.12,304.21 L130.15,306.00 L130.35,296.00 L130.80,293.00 L130.90,271.36 L131.80,270.36 L132.25,266.36 L132.70,270.36 L133.60,271.36 L133.70,293.00 L134.15,296.00 L134.35,306.00 L134.95,304.66 L135.95,297.63 L136.46,306.38 L137.28,297.53 L138.10,304.07 L139.15,306.00 L139.35,296.00 L139.80,293.00 L139.90,250.00 L140.80,249.00 L141.25,245.00 L141.70,249.00 L142.60,250.00 L142.70,293.00 L143.15,296.00 L143.35,306.00 L143.95,306.45 L144.97,301.37 L145.62,304.92 L146.22,301.90 L147.04,305.95 L148.15,306.00 L148.35,296.00 L148.80,293.00 L148.90,269.62 L149.80,268.62 L150.25,264.62 L150.70,268.62 L151.60,269.62 L151.70,293.00 L152.15,296.00 L152.35,306.00 L152.95,304.56 L153.94,303.39 L154.95,306.02 L155.94,301.68 L156.58,305.29 L157.15,306.00 L157.35,296.00 L157.80,293.00 L157.90,273.06 L158.80,272.06 L159.25,268.06 L159.70,272.06 L160.60,273.06 L160.70,293.00 L161.15,296.00 L161.35,306.00 L161.95,304.07 L162.62,298.31 L163.53,306.39 L164.30,303.06 L165.39,306.39 L166.15,306.00 L166.35,296.00 L166.80,293.00 L166.90,271.05 L167.80,270.05 L168.25,266.05 L168.70,270.05 L169.60,271.05 L169.70,293.00 L170.15,296.00 L170.35,306.00 L170.95,304.57 L171.57,297.93 L172.44,306.25 L173.45,299.86 L174.34,306.00 L175.15,306.00 L175.35,296.00 L175.80,293.00 L175.90,253.00 L176.80,252.00 L177.25,248.00 L177.70,252.00 L178.60,253.00 L178.70,293.00 L179.15,296.00 L179.35,306.00 L179.95,305.65 L181.00,301.98 L181.95,305.20 L182.55,302.02 L183.25,306.00 L184.15,306.00 L184.35,296.00 L184.80,293.00 L184.90,269.23 L185.80,268.23 L186.25,264.23 L186.70,268.23 L187.60,269.23 L187.70,293.00 L188.15,296.00 L188.35,306.00 L188.95,304.99 L189.69,303.13 L190.63,304.43 L191.20,297.56 L192.24,306.02 L193.15,306.00 L193.35,296.00 L193.80,293.00 L193.90,274.65 L194.80,273.65 L195.25,269.65 L195.70,273.65 L196.60,274.65 L196.70,293.00 L197.15,296.00 L197.35,306.00 L197.95,306.45 L198.84,298.95 L199.67,304.33 L200.18,303.30 L201.07,305.32 L202.15,306.00 L202.35,296.00 L202.80,293.00 L202.90,271.58 L203.80,270.58 L204.25,266.58 L204.70,270.58 L205.60,271.58 L205.70,293.00 L206.15,296.00 L206.35,306.00 L206.95,306.18 L207.95,297.98 L208.60,304.73 L209.24,300.61 L209.90,305.05 L210.48,302.87 L211.15,306.00 L211.35,296.00 L211.80,293.00 L211.90,255.00 L212.80,254.00 L213.25,250.00 L213.70,254.00 L214.60,255.00 L214.70,293.00 L215.15,296.00 L215.35,306.00 L215.95,305.15 L216.80,302.83 L217.55,306.29 L218.35,300.22 L219.17,304.05 L220.15,306.00 L220.35,296.00 L220.80,293.00 L220.90,268.84 L221.80,267.84 L222.25,263.84 L222.70,267.84 L223.60,268.84 L223.70,293.00 L224.15,296.00 L224.35,306.00 L224.95,304.46 L225.45,302.09 L226.06,305.18 L226.99,300.40 L227.69,305.30 L228.52,301.99 L229.15,306.00 L229.35,296.00 L229.80,293.00 L229.90,274.12 L230.80,273.12 L231.25,269.12 L231.70,273.12 L232.60,274.12 L232.70,293.00 L233.15,296.00 L233.35,306.00 L233.95,304.62 L234.62,301.91 L235.42,305.40 L236.38,302.89 L237.14,305.53 L238.15,306.00 L238.35,296.00 L238.80,293.00 L238.90,271.78 L239.80,270.78 L240.25,266.78 L240.70,270.78 L241.60,271.78 L241.70,293.00 L242.15,296.00 L242.35,306.00 L242.95,305.73 L243.72,300.23 L244.51,306.35 L245.43,302.64 L246.49,304.65 L247.15,306.00 L247.35,296.00 L247.80,293.00 L247.90,256.25 L248.80,255.25 L249.25,251.25 L249.70,255.25 L250.60,256.25 L250.70,293.00 L251.15,296.00 L251.35,306.00 L251.95,306.36 L252.95,297.46 L253.53,305.11 L254.07,298.18 L254.61,305.67 L255.58,302.78 L256.15,306.00 L256.35,296.00 L256.80,293.00 L256.90,268.44 L257.80,267.44 L258.25,263.44 L258.70,267.44 L259.60,268.44 L259.70,293.00 L260.15,296.00 L260.35,306.00 L260.95,305.79 L261.85,297.50 L262.88,306.42 L263.51,303.17 L264.25,305.22 L265.15,306.00 L265.35,296.00 L265.80,293.00 L265.90,274.66 L266.80,273.66 L267.25,269.66 L267.70,273.66 L268.60,274.66 L268.70,293.00 L269.15,296.00 L269.35,306.00 L269.95,304.40 L270.71,300.11 L271.41,304.49 L272.10,301.56 L272.62,305.39 L273.38,296.63 L274.15,306.00 L274.35,296.00 L274.80,293.00 L274.90,272.06 L275.80,271.06 L276.25,267.06 L276.70,271.06 L277.60,272.06 L277.70,293.00 L278.15,296.00 L278.35,306.00 L278.95,305.28 L279.49,303.40 L280.46,306.43 L281.02,298.36 L281.55,305.95 L282.21,297.41 L283.15,306.00 L283.35,296.00 L283.80,293.00 L283.90,257.50 L284.80,256.50 L285.25,252.50 L285.70,256.50 L286.60,257.50 L286.70,293.00 L287.15,296.00 L287.35,306.00 L287.95,306.28 L288.94,298.31 L289.53,306.30 L290.37,301.40 L290.93,304.14 L292.15,306.00 L292.35,296.00 L292.80,293.00 L292.90,268.05 L293.80,267.05 L294.25,263.05 L294.70,267.05 L295.60,268.05 L295.70,293.00 L296.15,296.00 L296.35,306.00 L296.95,305.06 L297.49,303.07 L298.37,306.00 L298.92,302.49 L299.46,306.16 L300.24,298.87 L301.15,306.00 L301.35,296.00 L301.80,293.00 L301.90,274.85 L302.80,273.85 L303.25,269.85 L303.70,273.85 L304.60,274.85 L304.70,293.00 L305.15,296.00 L305.35,306.00 L305.95,304.67 L306.53,300.19 L307.17,304.27 L307.77,296.85 L308.39,304.78 L309.07,301.82 L310.15,306.00 L310.35,296.00 L310.80,293.00 L310.90,271.75 L311.80,270.75 L312.25,266.75 L312.70,270.75 L313.60,271.75 L313.70,293.00 L314.15,296.00 L314.35,306.00 L314.95,304.44 L315.66,296.63 L316.31,304.04 L317.25,300.36 L317.86,305.19 L319.15,306.00 L319.35,296.00 L319.80,293.00 L319.90,258.25 L320.80,257.25 L321.25,253.25 L321.70,257.25 L322.60,258.25 L322.70,293.00 L323.15,296.00 L323.35,306.00 L323.95,304.27 L324.94,299.53 L325.74,306.09 L326.47,300.05 L327.39,306.46 L328.15,306.00 L328.35,296.00 L328.80,293.00 L328.90,267.66 L329.80,266.66 L330.25,262.66 L330.70,266.66 L331.60,267.66 L331.70,293.00 L332.15,296.00 L332.35,306.00 L332.95,306.08 L333.87,300.95 L334.62,304.87 L335.15,297.41 L335.69,305.85 L336.35,297.64 L337.15,306.00 L337.35,296.00 L337.80,293.00 L337.90,274.68 L338.80,273.68 L339.25,269.68 L339.70,273.68 L340.60,274.68 L340.70,293.00 L341.15,296.00 L341.35,306.00 L341.95,306.18 L342.85,298.47 L343.50,304.73 L344.27,297.60 L345.04,304.66 L346.15,306.00 L346.35,296.00 L346.80,293.00 L346.90,272.93 L347.80,271.93 L348.25,267.93 L348.70,271.93 L349.60,272.93 L349.70,293.00 L350.15,296.00 L350.35,306.00 L350.95,305.37 L351.60,303.26 L352.28,304.89 L352.78,299.17 L353.57,305.26 L354.19,300.03 L355.15,306.00 L355.35,296.00 L355.80,293.00 L355.90,260.00 L356.80,259.00 L357.25,255.00 L357.70,259.00 L358.60,260.00 L358.70,293.00 L359.15,296.00 L359.35,306.00 L359.95,304.66 L360.50,299.30 L361.03,304.06 L361.71,298.13 L362.56,305.32 L363.51,301.10 L364.15,306.00 L364.35,296.00 L364.80,293.00 L364.90,267.26 L365.80,266.26 L366.25,262.26 L366.70,266.26 L367.60,267.26 L367.70,293.00 L368.15,296.00 L368.35,306.00 L368.95,306.20 L369.68,298.78 L370.77,304.37 L371.71,301.00 L372.24,306.09 L373.15,306.00 L373.35,296.00 L373.80,293.00 L373.90,274.25 L374.80,273.25 L375.25,269.25 L375.70,273.25 L376.60,274.25 L376.70,293.00 L377.15,296.00 L377.35,306.00 L377.95,305.83 L378.94,297.48 L379.75,305.26 L380.75,302.13 L382.15,306.00 L382.35,296.00 L382.80,293.00 L382.90,271.96 L383.80,270.96 L384.25,266.96 L384.70,270.96 L385.60,271.96 L385.70,293.00 L386.15,296.00 L386.35,306.00 L386.95,306.23 L387.86,301.35 L388.50,304.08 L389.08,299.02 L389.64,306.09 L390.48,300.89 L391.15,306.00 L391.35,296.00 L391.80,293.00 L391.90,260.75 L392.80,259.75 L393.25,255.75 L393.70,259.75 L394.60,260.75 L394.70,293.00 L395.15,296.00 L395.35,306.00 L395.95,305.70 L396.74,296.52 L397.72,305.87 L398.52,300.25 L399.42,304.17 L400.15,306.00 L400.35,296.00 L400.80,293.00 L400.90,266.87 L401.80,265.87 L402.25,261.87 L402.70,265.87 L403.60,266.87 L403.70,293.00 L404.15,296.00 L404.35,306.00 L404.95,304.63 L405.49,298.36 L406.43,304.51 L407.38,303.33 L408.17,304.96 L409.15,306.00 L409.35,296.00 L409.80,293.00 L409.90,274.37 L410.80,273.37 L411.25,269.37 L411.70,273.37 L412.60,274.37 L412.70,293.00 L413.15,296.00 L413.35,306.00 L413.95,305.92 L414.82,301.00 L415.37,304.37 L416.02,301.70 L416.70,305.42 L417.21,296.92 L418.15,306.00 L418.35,296.00 L418.80,293.00 L418.90,272.18 L419.80,271.18 L420.25,267.18 L420.70,271.18 L421.60,272.18 L421.70,293.00 L422.15,296.00 L422.35,306.00 L422.95,305.73 L423.86,298.54 L424.67,305.16 L425.45,297.33 L426.48,304.50 L427.15,306.00 L427.35,296.00 L427.80,293.00 L427.90,262.00 L428.80,261.00 L429.25,257.00 L429.70,261.00 L430.60,262.00 L430.70,293.00 L431.15,296.00 L431.35,306.00 L431.95,306.34 L432.46,299.71 L433.45,306.42 L434.22,298.38 L434.85,306.36 L435.47,300.57 L436.15,306.00 L436.35,296.00 L436.80,293.00 L436.90,266.48 L437.80,265.48 L438.25,261.48 L438.70,265.48 L439.60,266.48 L439.70,293.00 L440.15,296.00 L440.35,306.00 L440.95,305.31 L442.02,297.43 L443.01,305.27 L444.05,301.42 L445.15,306.00 L445.35,296.00 L445.80,293.00 L445.90,274.80 L446.80,273.80 L447.25,269.80 L447.70,273.80 L448.60,274.80 L448.70,293.00 L449.15,296.00 L449.35,306.00 L449.95,305.22 L450.46,296.53 L451.26,305.13 L451.94,297.48 L452.65,304.79 L454.15,306.00 L454.35,296.00 L454.80,293.00 L454.90,270.50 L455.80,269.50 L456.25,265.50 L456.70,269.50 L457.60,270.50 L457.70,293.00 L458.15,296.00 L458.35,306.00 L458.95,305.88 L459.95,297.34 L461.01,305.78 L462.05,298.53 L463.15,306.00 L463.35,296.00 L463.80,293.00 L463.90,262.50 L464.80,261.50 L465.25,257.50 L465.70,261.50 L466.60,262.50 L466.70,293.00 L467.15,296.00 L467.35,306.00 L467.95,304.98 L469.05,300.62 L469.77,305.07 L470.43,296.84 L470.99,306.09 L472.15,306.00 L472.35,296.00 L472.80,293.00 L472.90,266.08 L473.80,265.08 L474.25,261.08 L474.70,265.08 L475.60,266.08 L475.70,293.00 L476.15,296.00 L476.35,306.00 L476.95,306.34 L477.60,298.36 L478.41,304.47 L479.13,303.19 L480.16,306.03 L481.15,306.00 L481.35,296.00 L481.80,293.00 L481.90,274.83 L482.80,273.83 L483.25,269.83 L483.70,273.83 L484.60,274.83 L484.70,293.00 L485.15,296.00 L485.35,306.00 L485.95,306.35 L486.78,301.54 L487.31,305.83 L488.08,301.77 L488.97,304.72 L489.50,302.99 L490.15,306.00 L490.35,296.00 L490.80,293.00 L490.90,271.68 L491.80,270.68 L492.25,266.68 L492.70,270.68 L493.60,271.68 L493.70,293.00 L494.15,296.00 L494.35,306.00 L494.95,304.86 L495.63,301.67 L496.71,304.65 L497.61,298.61 L498.44,304.99 L499.15,306.00 L499.35,296.00 L499.80,293.00 L499.90,263.00 L500.80,262.00 L501.25,258.00 L501.70,262.00 L502.60,263.00 L502.70,293.00 L503.15,296.00 L503.35,306.00 L503.95,304.40 L504.57,302.84 L505.37,304.55 L506.42,303.48 L507.19,304.35 L508.15,306.00 L508.35,296.00 L508.80,293.00 L508.90,265.69 L509.80,264.69 L510.25,260.69 L510.70,264.69 L511.60,265.69 L511.70,293.00 L512.15,296.00 L512.35,306.00 L512.95,304.23 L513.66,297.14 L514.30,304.65 L515.14,302.71 L516.09,305.03 L517.15,306.00 L517.35,296.00 L517.80,293.00 L517.90,274.05 L518.80,273.05 L519.25,269.05 L519.70,273.05 L520.60,274.05 L520.70,293.00 L521.15,296.00 L521.35,306.00 L521.95,304.94 L522.65,296.93 L523.32,306.42 L523.89,300.02 L524.77,306.16 L525.40,298.40 L526.15,306.00 L526.35,296.00 L526.80,293.00 L526.90,271.50 L527.80,270.50 L528.25,266.50 L528.70,270.50 L529.60,271.50 L529.70,293.00 L530.15,296.00 L530.35,306.00 L530.95,305.11 L532.02,302.44 L533.05,304.05 L533.57,301.47 L534.60,305.18 L535.15,306.00 L535.35,296.00 L535.80,293.00 L535.90,263.75 L536.80,262.75 L537.25,258.75 L537.70,262.75 L538.60,263.75 L538.70,293.00 L539.15,296.00 L539.35,306.00 L539.95,304.00 L540.68,302.99 L541.68,306.14 L542.76,298.24 L543.33,304.39 L544.15,306.00 L544.35,296.00 L544.80,293.00 L544.90,265.30 L545.80,264.30 L546.25,260.30 L546.70,264.30 L547.60,265.30 L547.70,293.00 L548.15,296.00 L548.35,306.00 L548.95,305.71 L550.01,301.55 L550.90,305.91 L551.68,300.36 L552.20,305.96 L553.15,306.00 L553.35,296.00 L553.80,293.00 L553.90,274.84 L554.80,273.84 L555.25,269.84 L555.70,273.84 L556.60,274.84 L556.70,293.00 L557.15,296.00 L557.35,306.00 L557.95,305.61 L558.63,297.40 L559.28,305.59 L560.20,297.28 L560.74,305.31 L561.59,299.22 L562.15,306.00 L562.35,296.00 L562.80,293.00 L562.90,272.00 L563.80,271.00 L564.25,267.00 L564.70,271.00 L565.60,272.00 L565.70,293.00 L566.15,296.00 L566.35,306.00 L566.95,304.03 L567.63,299.72 L568.71,305.61 L569.74,299.83 L570.38,304.62 L571.15,306.00 L571.35,296.00 L571.80,293.00 L571.90,264.50 L572.80,263.50 L573.25,259.50 L573.70,263.50 L574.60,264.50 L574.70,293.00 L575.15,296.00 L575.35,306.00 L575.95,299.61 L576.95,292.39 L577.95,300.29" fill="none" stroke="#c88a1c" stroke-width="0.85" stroke-linejoin="miter"/>
<!-- cursors -->
<path d="M33.3,116 V333" stroke="#e8a020" stroke-width="1.2"/>
<path d="M69.5,117 V333" stroke="#e8a020" stroke-width="1.2" stroke-dasharray="3,2"/>
<path d="M25.5,108.8 H41 L33.3,116.5 Z" fill="#f0a828"/>
<text x="33.4" y="114.2" font-size="5.8" font-weight="bold" fill="#3a2000" text-anchor="middle">1</text>
<path d="M61.5,109.3 H77.5 L69.5,117 Z" fill="#000" stroke="#e8a020" stroke-width="1"/>
<text x="69.6" y="114.2" font-size="5.8" font-weight="bold" fill="#e8a020" text-anchor="middle">2</text>
<path d="M16.7,154.2 H26 M77,154.2 H84.8" stroke="#f0a828" stroke-width="2.6"/>
<path d="M24.7,150.6 L31.7,154.2 L24.7,157.9 Z M77.6,150.6 L70.6,154.2 L77.6,157.9 Z" fill="#f0a828"/>
<path d="M27,226.5 H40 M63,237.8 H76" stroke="#e8a020" stroke-width="1.5"/>
<!-- F marker -->
<text x="1.6" y="236.4" font-size="9.8" fill="#e8a020" stroke="#e8a020" stroke-width="0.3" textLength="4.6" lengthAdjust="spacingAndGlyphs">F</text>
<path d="M7,229 L14.5,233.3 L7,237.6 Z" fill="#f0a020"/>
<!-- panels -->
<rect x="15.5" y="161.5" width="172.5" height="59.5" fill="#141919" fill-opacity="0.88"/>
<rect x="454.5" y="112.5" width="120" height="36" fill="#222727" fill-opacity="0.92"/>
<!-- delta triangles -->
<path d="M49.5,214 L53.2,207.8 L56.9,214 Z M106,214 L109.7,207.8 L113.4,214 Z" fill="none" stroke="#e8a030" stroke-width="1"/>
<!-- status badges -->
<rect x="21" y="340" width="27" height="14" fill="#f2ee00"/>
<rect x="137" y="340.3" width="27" height="13.5" fill="#6f8585"/>
<rect x="428.2" y="340" width="22.8" height="12" fill="#f2ee00"/>
<path d="M187.7,347.5 H190.8 M191.7,347.5 H194.8" stroke="#b0b0b0" stroke-width="1"/>
<path d="M453.8,352.2 H456.7 L463.3,339.8 H465.8" fill="none" stroke="#e6e200" stroke-width="1.2"/>
<path d="M256,366 H264" stroke="#f0a020" stroke-width="3.2"/>
<path d="M263,362.2 L268.3,366 L263,369.9 Z" fill="#f0a020"/>
<path d="M267,359.7 H272 L269.5,362.6 Z" fill="#f0a020"/>
<text x="3.75" y="30.4" font-size="11.59" textLength="18.28" lengthAdjust="spacingAndGlyphs" fill="#f2f2f2" stroke="#f2f2f2" stroke-width="0.3" font-weight="bold">Tek</text>
<text x="30.7" y="30.6" font-size="10.29" textLength="17.2" lengthAdjust="spacingAndGlyphs" fill="#f2f2f2" stroke="#f2f2f2" stroke-width="0.05">Run</text>
<text x="81.8" y="29.6" font-size="10.72" textLength="25.38" lengthAdjust="spacingAndGlyphs" fill="#f2f2f2" stroke="#f2f2f2" stroke-width="0.05">Trig’d</text>
<text x="491.0" y="29.7" font-size="9.42" textLength="18.01" lengthAdjust="spacingAndGlyphs" fill="#f0f0f0" stroke="#f0f0f0" stroke-width="0.05" font-weight="bold">Fine</text>
<text x="462.0" y="126" font-size="11.88" textLength="59.1" lengthAdjust="spacingAndGlyphs" fill="#e8a030" stroke="#e8a030" stroke-width="0.42">Source: CH1</text>
<text x="461.5" y="145.2" font-size="11.59" textLength="96.3" lengthAdjust="spacingAndGlyphs" fill="#e8a030" stroke="#e8a030" stroke-width="0.42">Vertical Scale: 20dB</text>
<text x="53.5" y="177.7" font-size="9.13" textLength="12.5" lengthAdjust="spacingAndGlyphs" fill="#e8a030" stroke="#e8a030" stroke-width="0.42">F1:</text>
<text x="68.0" y="177.7" font-size="9.13" textLength="32.99" lengthAdjust="spacingAndGlyphs" fill="#e8a030" stroke="#e8a030" stroke-width="0.42">1.00kHz</text>
<text x="105.5" y="177.7" font-size="9.13" textLength="13.01" lengthAdjust="spacingAndGlyphs" fill="#e8a030" stroke="#e8a030" stroke-width="0.42">D1:</text>
<text x="120.5" y="177.7" font-size="9.13" textLength="29.0" lengthAdjust="spacingAndGlyphs" fill="#e8a030" stroke="#e8a030" stroke-width="0.42">7.27dB</text>
<text x="51.5" y="196.0" font-size="9.28" textLength="12.5" lengthAdjust="spacingAndGlyphs" fill="#e8a030" stroke="#e8a030" stroke-width="0.42">F2:</text>
<text x="66.0" y="196.0" font-size="9.28" textLength="33.49" lengthAdjust="spacingAndGlyphs" fill="#e8a030" stroke="#e8a030" stroke-width="0.42">3.00kHz</text>
<text x="104.0" y="196.0" font-size="9.28" textLength="13.01" lengthAdjust="spacingAndGlyphs" fill="#e8a030" stroke="#e8a030" stroke-width="0.42">D2:</text>
<text x="119.5" y="196.0" font-size="9.28" textLength="31.48" lengthAdjust="spacingAndGlyphs" fill="#e8a030" stroke="#e8a030" stroke-width="0.42">-2.47dB</text>
<text x="57.5" y="214.5" font-size="9.28" textLength="7.99" lengthAdjust="spacingAndGlyphs" fill="#e8a030" stroke="#e8a030" stroke-width="0.42">F:</text>
<text x="67.8" y="214.5" font-size="9.28" textLength="33.19" lengthAdjust="spacingAndGlyphs" fill="#e8a030" stroke="#e8a030" stroke-width="0.42">2.00kHz</text>
<text x="114.5" y="214.5" font-size="9.28" textLength="8.0" lengthAdjust="spacingAndGlyphs" fill="#e8a030" stroke="#e8a030" stroke-width="0.42">D:</text>
<text x="124.5" y="214.5" font-size="9.28" textLength="29.0" lengthAdjust="spacingAndGlyphs" fill="#e8a030" stroke="#e8a030" stroke-width="0.42">9.73dB</text>
<text x="24.25" y="351.6" font-size="12.03" textLength="20.26" lengthAdjust="spacingAndGlyphs" fill="#141400" stroke="#141400" stroke-width="0.25">CH1</text>
<text x="66.7" y="351.6" font-size="11.59" textLength="25.58" lengthAdjust="spacingAndGlyphs" fill="#e6e200" stroke="#e6e200" stroke-width="0.25">1.00V</text>
<text x="140.8" y="351.4" font-size="10.58" textLength="20.21" lengthAdjust="spacingAndGlyphs" fill="#1e2828" stroke="#1e2828" stroke-width="0.25">CH2</text>
<text x="255.8" y="351.7" font-size="11.74" textLength="34.99" lengthAdjust="spacingAndGlyphs" fill="#e6e6e6" stroke="#e6e6e6" stroke-width="0.25">2.00ms</text>
<text x="354.8" y="351.7" font-size="11.88" textLength="41.01" lengthAdjust="spacingAndGlyphs" fill="#e6e6e6" stroke="#e6e6e6" stroke-width="0.25">62.5kS/s</text>
<text x="429.7" y="350" font-size="10.87" textLength="19.31" lengthAdjust="spacingAndGlyphs" fill="#141400" stroke="#141400" stroke-width="0.25">CH1</text>
<text x="469.6" y="349.9" font-size="11.3" textLength="26.38" lengthAdjust="spacingAndGlyphs" fill="#e6e200" stroke="#e6e200" stroke-width="0.25">2.48V</text>
<text x="274.75" y="371.3" font-size="11.16" textLength="42.05" lengthAdjust="spacingAndGlyphs" fill="#e09a18" stroke="#e09a18" stroke-width="0.25">0.00000s</text>
<text x="354.9" y="371.4" font-size="10.72" textLength="56.01" lengthAdjust="spacingAndGlyphs" fill="#e6e6e6" stroke="#e6e6e6" stroke-width="0.25">2000 points</text>
<text x="428.9" y="371.6" font-size="11.01" textLength="55.82" lengthAdjust="spacingAndGlyphs" fill="#e6e200" stroke="#e6e200" stroke-width="0.25">1.00000kHz</text>
</svg>
</body></html>
